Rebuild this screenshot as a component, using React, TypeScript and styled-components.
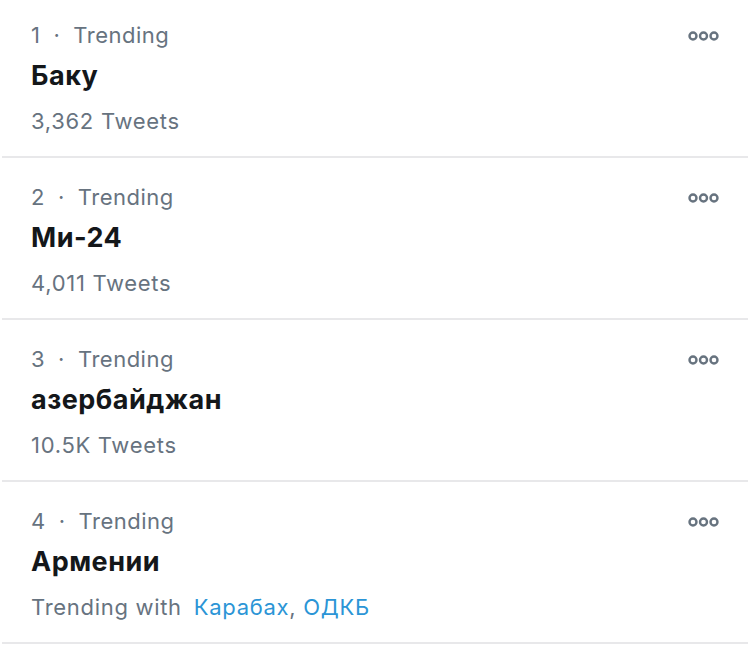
import React from 'react';
import styled, { createGlobalStyle } from 'styled-components';

const GlobalStyle = createGlobalStyle`
  html, body {
    margin: 0;
    padding: 0;
    background: #ffffff;
  }
  body {
    font-family: Inter, "Noto Sans", "Liberation Sans", sans-serif;
    -webkit-font-smoothing: antialiased;
  }
`;

interface TrendItem {
  rank: number;
  name: string;
  tweets?: string;
  related?: string[];
}

const trends: TrendItem[] = [
  { rank: 1, name: 'Баку', tweets: '3,362 Tweets' },
  { rank: 2, name: 'Ми-24', tweets: '4,011 Tweets' },
  { rank: 3, name: 'азербайджан', tweets: '10.5K Tweets' },
  { rank: 4, name: 'Армении', related: ['Карабах', 'ОДКБ'] },
];

const Viewport = styled.div`
  width: 750px;
  height: 657px;
  overflow: hidden;
  background: #ffffff;
`;

const List = styled.div`
  margin-top: -4px;
`;

const Row = styled.div`
  position: relative;
  height: 162px;
  margin: 0 2px;
  padding: 0 29px;
  box-sizing: border-box;
  border-bottom: 2px solid #e8e8ea;
  display: flex;
  flex-direction: column;
`;

const Meta = styled.div`
  margin-top: 24px;
  height: 30px;
  font-size: 22px;
  line-height: 30px;
  color: #67737f;
  letter-spacing: 0.5px;
`;

const Dot = styled.span`
  margin: 0 13px 0 13px;
`;

const Title = styled.div`
  margin-top: 10px;
  height: 32px;
  font-size: 27px;
  line-height: 32px;
  font-weight: 700;
  color: #14171a;
  letter-spacing: 0.5px;
`;

const Count = styled.div`
  margin-top: 14px;
  font-size: 22px;
  line-height: 30px;
  color: #67737f;
  letter-spacing: 0.7px;
`;

const Link = styled.span<{ $first?: boolean }>`
  color: #2b95d6;
  margin-left: ${(p) => (p.$first ? '12px' : '0')};
`;

const MoreButton = styled.button`
  position: absolute;
  top: 34px;
  right: 29px;
  padding: 0;
  border: 0;
  background: none;
  display: flex;
`;

const MoreIcon = () => (
  <svg width="31" height="12" viewBox="0 0 31 12" fill="none">
    {[5, 15.5, 26].map((cx) => (
      <circle key={cx} cx={cx} cy={6} r={3.5} stroke="#67737f" strokeWidth={2.4} />
    ))}
  </svg>
);

export default function App() {
  return (
    <>
      <GlobalStyle />
      <Viewport>
        <List>
          {trends.map((t) => (
            <Row key={t.rank}>
              <Meta>
                {t.rank}
                <Dot>·</Dot>
                Trending
              </Meta>
              <Title>{t.name}</Title>
              <Count>
                {t.tweets ? (
                  t.tweets
                ) : (
                  <>
                    Trending with
                    <Link $first>{t.related?.[0]}</Link>, <Link>{t.related?.[1]}</Link>
                  </>
                )}
              </Count>
              <MoreButton aria-label="More">
                <MoreIcon />
              </MoreButton>
            </Row>
          ))}
        </List>
      </Viewport>
    </>
  );
}
